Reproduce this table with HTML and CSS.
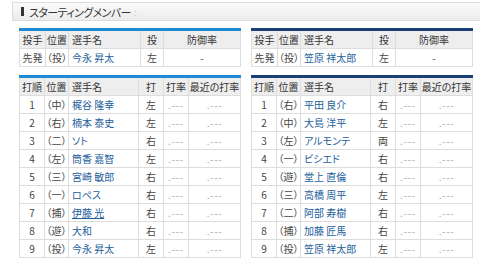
FILE: index.html
```html
<!DOCTYPE html>
<html lang="ja">
<head>
<meta charset="utf-8">
<link rel="stylesheet" href="styles.css">
</head>
<body>
<div class="wrap">
  <div class="title"><span class="mark"></span><span class="title-text">スターティングメンバー</span><span class="sep">:</span></div>
  <div class="cols">
    <div class="team">
      <table class="tbl p-tbl home">
        <colgroup><col class="c1"><col class="c2"><col class="c3"><col class="c4"><col></colgroup>
        <tr class="hd"><th>投手</th><th>位置</th><th class="l">選手名</th><th>投</th><th>防御率</th></tr>
        <tr><td>先発</td><td>（投）</td><td class="l"><a>今永 昇太</a></td><td>左</td><td>-</td></tr>
      </table>
      <table class="tbl b-tbl home">
        <colgroup><col class="c1"><col class="c2"><col class="c3"><col class="c4"><col class="c5"><col></colgroup>
        <tr class="hd"><th>打順</th><th>位置</th><th class="l">選手名</th><th>打</th><th>打率</th><th>最近の打率</th></tr>
        <tr><td>1</td><td>（中）</td><td class="l"><a>梶谷 隆幸</a></td><td>左</td><td class="avg l2">.---</td><td class="avg">.---</td></tr>
        <tr><td>2</td><td>（右）</td><td class="l"><a>楠本 泰史</a></td><td>左</td><td class="avg l2">.---</td><td class="avg">.---</td></tr>
        <tr><td>3</td><td>（二）</td><td class="l"><a>ソト</a></td><td>右</td><td class="avg l2">.---</td><td class="avg">.---</td></tr>
        <tr><td>4</td><td>（左）</td><td class="l"><a>筒香 嘉智</a></td><td>左</td><td class="avg l2">.---</td><td class="avg">.---</td></tr>
        <tr><td>5</td><td>（三）</td><td class="l"><a>宮崎 敏郎</a></td><td>右</td><td class="avg l2">.---</td><td class="avg">.---</td></tr>
        <tr><td>6</td><td>（一）</td><td class="l"><a>ロペス</a></td><td>右</td><td class="avg l2">.---</td><td class="avg">.---</td></tr>
        <tr><td>7</td><td>（捕）</td><td class="l"><a class="u">伊藤 光</a></td><td>右</td><td class="avg l2">.---</td><td class="avg">.---</td></tr>
        <tr><td>8</td><td>（遊）</td><td class="l"><a>大和</a></td><td>右</td><td class="avg l2">.---</td><td class="avg">.---</td></tr>
        <tr><td>9</td><td>（投）</td><td class="l"><a>今永 昇太</a></td><td>左</td><td class="avg l2">.---</td><td class="avg">.---</td></tr>
      </table>
    </div>
    <div class="team">
      <table class="tbl p-tbl away">
        <colgroup><col class="c1"><col class="c2"><col class="c3"><col class="c4"><col></colgroup>
        <tr class="hd"><th>投手</th><th>位置</th><th class="l">選手名</th><th>投</th><th>防御率</th></tr>
        <tr><td>先発</td><td>（投）</td><td class="l"><a>笠原 祥太郎</a></td><td>左</td><td>-</td></tr>
      </table>
      <table class="tbl b-tbl away">
        <colgroup><col class="c1"><col class="c2"><col class="c3"><col class="c4"><col class="c5"><col></colgroup>
        <tr class="hd"><th>打順</th><th>位置</th><th class="l">選手名</th><th>打</th><th>打率</th><th>最近の打率</th></tr>
        <tr><td>1</td><td>（右）</td><td class="l"><a>平田 良介</a></td><td>右</td><td class="avg l2">.---</td><td class="avg">.---</td></tr>
        <tr><td>2</td><td>（中）</td><td class="l"><a>大島 洋平</a></td><td>左</td><td class="avg l2">.---</td><td class="avg">.---</td></tr>
        <tr><td>3</td><td>（左）</td><td class="l"><a>アルモンテ</a></td><td>両</td><td class="avg l2">.---</td><td class="avg">.---</td></tr>
        <tr><td>4</td><td>（一）</td><td class="l"><a>ビシエド</a></td><td>右</td><td class="avg l2">.---</td><td class="avg">.---</td></tr>
        <tr><td>5</td><td>（遊）</td><td class="l"><a>堂上 直倫</a></td><td>右</td><td class="avg l2">.---</td><td class="avg">.---</td></tr>
        <tr><td>6</td><td>（三）</td><td class="l"><a>高橋 周平</a></td><td>左</td><td class="avg l2">.---</td><td class="avg">.---</td></tr>
        <tr><td>7</td><td>（二）</td><td class="l"><a>阿部 寿樹</a></td><td>右</td><td class="avg l2">.---</td><td class="avg">.---</td></tr>
        <tr><td>8</td><td>（捕）</td><td class="l"><a>加藤 匠馬</a></td><td>右</td><td class="avg l2">.---</td><td class="avg">.---</td></tr>
        <tr><td>9</td><td>（投）</td><td class="l"><a>笠原 祥太郎</a></td><td>左</td><td class="avg l2">.---</td><td class="avg">.---</td></tr>
      </table>
    </div>
  </div>
</div>
</body>
</html>
```
FILE: styles.css
```css
html, body {
  margin: 0;
  padding: 0;
  background: #fff;
}
body {
  font-family: "Noto Sans CJK JP", "Noto Sans", sans-serif;
  font-size: 10px;
  color: #333;
  overflow: hidden;
  font-feature-settings: "palt";
}
.wrap {
  padding: 2px 0 0 12px;
  width: 480px;
}
.title {
  height: 17px;
  border: 1px solid #dcdcdc;
  border-right: none;
  background: linear-gradient(#fafafa, #ececec);
  display: flex;
  align-items: center;
  padding-left: 8px;
}
.mark {
  width: 3px;
  height: 9px;
  background: #333;
  margin-right: 5px;
}
.title-text {
  font-size: 11px;
  color: #333;
  letter-spacing: -0.6px;
}
.sep {
  color: #ccc;
  margin-left: 3px;
  font-size: 10px;
}
.cols {
  display: flex;
  gap: 10px;
  padding: 7px 0 0 7px;
}
.team {
  width: 222px;
  display: flex;
  flex-direction: column;
  gap: 8px;
}
.tbl {
  width: 222px;
  border-collapse: collapse;
  table-layout: fixed;
  border-top: 3px solid #1d8ad1;
}
.tbl.away {
  border-top-color: #1a3f75;
}
.tbl th, .tbl td {
  border: 1px solid #dddddd;
  height: 17px;
  padding: 0;
  text-align: center;
  font-weight: normal;
  white-space: nowrap;
  line-height: 15px;
  overflow: hidden;
}
.tbl tr:first-child th {
  border-top: none;
}
.tbl .hd th {
  background: #eeeeee;
  color: #333;
}
.tbl td {
  background: #fff;
  color: #444;
}
.tbl .l {
  text-align: left;
  padding-left: 3px;
}
.tbl a {
  color: #23609b;
}
.tbl a.u {
  text-decoration: underline;
}
.tbl td.avg {
  color: #aaa;
  font-size: 10px;
  letter-spacing: 0.6px;
}
.tbl td.l2 {
  text-align: left;
  padding-left: 4px;
}
.p-tbl .c1 { width: 26px; }
.p-tbl .c2 { width: 23px; }
.p-tbl .c3 { width: 72px; }
.p-tbl .c4 { width: 23px; }
.b-tbl .c1 { width: 25px; }
.b-tbl .c2 { width: 24px; }
.b-tbl .c3 { width: 70px; }
.b-tbl .c4 { width: 25px; }
.b-tbl .c5 { width: 25px; }
```
